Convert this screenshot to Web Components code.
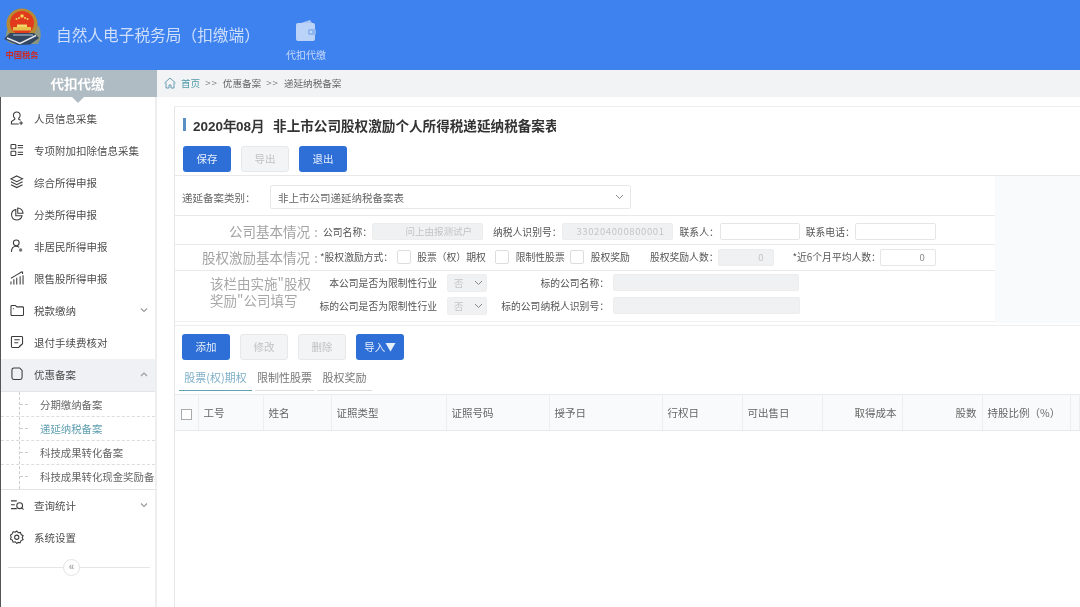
<!DOCTYPE html>
<html lang="zh-CN"><head><meta charset="utf-8"><title>自然人电子税务局（扣缴端）</title>
<style>
html,body{margin:0;height:607px;overflow:hidden;background:#fff}
body{font-family:"Noto Sans CJK SC","Liberation Sans",sans-serif;font-size:10.5px;color:#555;display:flex;flex-direction:column;filter:blur(.35px)}
.body{display:flex;flex:1;min-height:0}
</style></head><body>
<app-header></app-header>
<div class="body">
<side-nav>
<nav-item icon="user">人员信息采集</nav-item>
<nav-item icon="list">专项附加扣除信息采集</nav-item>
<nav-item icon="layers">综合所得申报</nav-item>
<nav-item icon="pie">分类所得申报</nav-item>
<nav-item icon="person">非居民所得申报</nav-item>
<nav-item icon="chart">限售股所得申报</nav-item>
<nav-item icon="folder" chevron="down">税款缴纳</nav-item>
<nav-item icon="doc">退付手续费核对</nav-item>
<nav-item icon="page" chevron="up" active>优惠备案</nav-item>
<sub-menu>
<sub-item>分期缴纳备案</sub-item>
<sub-item active>递延纳税备案</sub-item>
<sub-item>科技成果转化备案</sub-item>
<sub-item>科技成果转化现金奖励备案</sub-item>
</sub-menu>
<nav-item icon="search" chevron="down">查询统计</nav-item>
<nav-item icon="gear">系统设置</nav-item>
</side-nav>
<main-area>
<filing-form></filing-form>
</main-area>
</div>
<script>
const def=(name,css,html,init)=>customElements.define(name,class extends HTMLElement{
  connectedCallback(){ if(this.shadowRoot)return;
    const r=this.attachShadow({mode:'open'});
    r.innerHTML='<style>'+css+'</style>'+(typeof html==='function'?html(this):html);
    if(init)init(this,r);
  }});
const ic={
user:'<path d="M7 1a3.500 3.500 0 0 1 3.500 3.500c0 1.500-.7 2.500-1.500 3v1l2 1M7 1a3.500 3.500 0 0 0-3.500 3.500c0 1.500.7 2.500 1.500 3v1L1.500 11v2.500H9M11.500 10.500v4M9.500 12.500h4"/>',
list:'<rect x="1" y="1.500" width="5" height="4.500" rx=".8"/><rect x="1" y="8.500" width="5" height="4.500" rx=".8"/><path d="M8 2.500h5.500M8 5h5.500M8 9.500h5.500M8 12h5.500"/>',
layers:'<path d="M7 1l6 3-6 3-6-3zM1 7l6 3 6-3M1 10l6 3 6-3"/>',
pie:'<path d="M6 2.500a5.500 5.500 0 1 0 6.500 6.500H6z"/><path d="M8 1a5.500 5.500 0 0 1 5.500 5.500H8z"/>',
person:'<circle cx="6.500" cy="4" r="3"/><path d="M1.500 13.500c0-3.500 2-6 5-6 1.200 0 2 .3 3 1"/><circle cx="11" cy="11.500" r="1.800" fill="#777" stroke="none"/>',
chart:'<path d="M1 14v-3M4 14V8.500M7 14V7M10.500 14V5.500M13.500 14V4.500M1 7.500l5-3 6-3.500M11 1h2v2"/>',
folder:'<path d="M1 3.500a1 1 0 0 1 1-1h3.500L7 4h6a1 1 0 0 1 1 1v7a1 1 0 0 1-1 1H2a1 1 0 0 1-1-1zM3 6h1"/>',
doc:'<path d="M9 13H2.500a1 1 0 0 1-1-1V2.500a1 1 0 0 1 1-1H12a1 1 0 0 1 1 1V9zM4.500 5h5.500M4.500 8h4M9 13l1.500-2 2.500-2"/>',
page:'<path d="M4 1h6l2.500 2.500V11a2 2 0 0 1-2 2H4a2 2 0 0 1-2-2V3a2 2 0 0 1 2-2z"/>',
search:'<path d="M1 3h6M1 7h4M1 11h6"/><circle cx="10" cy="8" r="3"/><path d="M12 10l2 2"/>',
gear:'<path d="M7 1l1.500 1.800 2.300-.3.800 2.200 2 1.300-1 2 1 2-2.200 1-.8 2.200-2.300-.4L7 14l-1.500-1.800-2.300.4-.8-2.200L.3 9.400l1-2-1-2 2-1.300.9-2.200 2.300.3z"/><circle cx="7" cy="7.500" r="2.200"/>'
};
def('app-header',`:host{display:flex;height:70px;background:#3d82ef;color:#d3e2fb;flex:none}
.logo{width:50px;margin-left:2px;display:block;flex:none}
.t{font-size:15.700px;margin:24px 0 0 4px;line-height:22px;color:#cfdffb;width:226px;white-space:nowrap}
.m{display:flex;flex-direction:column;align-items:center;width:42px;margin-left:3px;padding-top:19px}
.m svg{display:block}.m span{font-size:10px;margin-top:6px;line-height:14px;color:#c6d9f9;white-space:nowrap}`,
`<svg class="logo" width="50" height="70" viewBox="0 0 50 70">
<path d="M5 30 Q1 42 11 44 L36 44 Q41 36 37 26 L22 26z" fill="#8b957f"/>
<circle cx="20" cy="24" r="15.500" fill="#b98a32"/><circle cx="20" cy="23" r="12" fill="#e23a1c"/>
<path d="M11 27h18v3.500H11z" fill="#e7c14a"/><path d="M15 24.500h10v2.500H15z" fill="#f1d768"/>
<circle cx="20" cy="16" r="1.800" fill="#f3d55a"/><circle cx="14.500" cy="19" r="1" fill="#f3d55a"/><circle cx="17" cy="18" r="1" fill="#f3d55a"/><circle cx="23" cy="18" r="1" fill="#f3d55a"/><circle cx="25.500" cy="19" r="1" fill="#f3d55a"/>
<path d="M8 33h24l5 5-9 6.500-12 .5-14-6z" fill="#33465f"/><path d="M5 38l13 5.500 16-8" stroke="#e3e8ee" stroke-width="1.500" fill="none"/><path d="M11 35h20" stroke="#bcd" fill="none"/>
<text x="3.500" y="58" font-size="8.500" font-weight="700" fill="#cc2a24" font-family="Noto Sans CJK SC,sans-serif" textLength="33" lengthAdjust="spacingAndGlyphs">中国税务</text></svg>
<div class="t">自然人电子税务局（扣缴端）</div>
<div class="m"><svg width="22" height="23" viewBox="0 0 22 23"><path d="M3 5 L15 1 L17 4z" fill="#a9c6f7"/><rect x="1" y="4" width="19" height="18" rx="2" fill="#bcd3f8"/><rect x="13" y="10" width="8" height="6" rx="1.500" fill="#8fb5f3"/><circle cx="16" cy="13" r="1" fill="#dfe9fc"/></svg><span>代扣代缴</span></div>`);

def('side-nav',`:host{display:flex;flex-direction:column;flex:none;width:157px;box-sizing:border-box;border-left:1px solid #555;border-right:2px solid #eceef0;position:relative;background:#fff}
.top{height:27px;margin:0 -2px 0 -1px;background:#b0bcc4;color:#fff;font:700 13.500px/27px "Noto Sans CJK SC",sans-serif;text-align:center;position:relative;text-indent:-2px;flex:none}
.top:after{content:"";position:absolute;left:72px;top:27px;border:6px solid transparent;border-top:6px solid #b0bcc4;border-bottom:0}
.list{padding-top:6px;display:flex;flex-direction:column}
.c{height:1px;background:#e6e6e6;margin:13px 5px 0 7px;position:relative;flex:none}
.c i{position:absolute;left:55px;top:-8px;width:15px;height:15px;border:1px solid #e4e4e4;border-radius:50%;background:#fff;color:#aaa;font:700 10px/14px "Liberation Sans",sans-serif;text-align:center}`,
`<div class="top">代扣代缴</div><div class="list"><slot></slot><div class="c"><i>«</i></div></div>`);

def('nav-item',`:host{display:flex;align-items:center;height:32px;font-size:10.500px;color:#4c4c4c;position:relative}
:host([active]){background:#f0f1f4}
svg.i{width:14px;height:14px;margin-left:9px;margin-right:10px;margin-top:-2px;flex:none;fill:none;stroke:#3c3c3c;stroke-width:1.100}
.t{flex:1;white-space:nowrap;margin-top:-2px}
svg.ch{width:8px;height:6px;margin-right:7px;margin-top:-2px;fill:none;stroke:#999;stroke-width:1.100}`,
h=>{const c=h.getAttribute('chevron');
return `<svg class="i" viewBox="0 0 14.500 14.500">${ic[h.getAttribute('icon')]||''}</svg><span class="t"><slot></slot></span>`+
(c?`<svg class="ch" viewBox="0 0 8 6"><path d="${c==='up'?'M1 5l3-3 3 3':'M1 1.500l3 3 3-3'}"/></svg>`:'')});

def('sub-menu',`:host{display:flex;flex-direction:column;background:#fff;border-top:1px solid #e4e4e4;border-bottom:1px solid #e4e4e4;box-sizing:border-box;height:99px;padding-top:1px;position:relative;overflow:hidden}
:host:before{content:"";position:absolute;left:18px;top:0;bottom:0;border-left:1px dashed #ccc}`,`<slot></slot>`);
def('sub-item',`:host{display:block;height:24px;flex:none;box-sizing:border-box;border-bottom:1px dashed #ddd;font-size:10.400px;line-height:23px;color:#666;white-space:nowrap;overflow:hidden;padding-left:39px;position:relative}
:host(:last-child){border-bottom:0}
:host([active]){color:#5f9fb0}
:host:before{content:"";position:absolute;left:19px;top:11px;width:8px;border-top:1px dashed #ccc}`,`<slot></slot>`);

def('main-area',`:host{flex:1;min-width:0;display:flex;flex-direction:column;background:#fff}
.crumb{height:27px;background:#f1f3f5;flex:none;display:flex;align-items:center;padding:0 0 1px 7px;box-sizing:border-box;font-size:9.600px;color:#666;white-space:nowrap}
.crumb svg{width:12px;height:12px;margin-right:5px;fill:none;stroke:#6a9bb5}
.crumb b{font-weight:400;color:#4f9aa8}.crumb i{font-style:normal;color:#888;margin:0 5px;letter-spacing:1px}
.wrap{flex:1;min-height:0;padding:9px 0 0 17px;overflow:hidden}`,
`<div class="crumb"><svg viewBox="0 0 12 12"><path d="M.5 6L6 1l5.500 5M2 5.500V11h3V8h2v3h3V5.500"/></svg><b>首页</b><i>&gt;&gt;</i>优惠备案<i>&gt;&gt;</i>递延纳税备案</div><div class="wrap"><slot></slot></div>`);

def('ui-btn',`:host{display:inline-block;width:48px;height:26px;box-sizing:border-box;border-radius:3px;background:#2e6fd7;color:#e6effc;font-size:10.500px;line-height:26px;text-align:center;flex:none;white-space:nowrap}
:host([off]){background:#f3f4f5;border:1px solid #e7e8ea;color:#c0c2c4;line-height:24px}`,`<slot></slot>`);
def('ui-input',`:host{display:block;height:17px;box-sizing:border-box;border:1px solid #e6e6e6;border-radius:2px;background:#fff;font-size:9.500px;line-height:15px;color:#c4c4c4;text-align:right;padding:0 10px;flex:none;white-space:nowrap;overflow:hidden}
:host([off]){background:#f0f1f2;border-color:#ededed}`,`<slot></slot>`);
def('ui-check',`:host{display:block;width:14px;height:14px;box-sizing:border-box;border:1px solid #ddd;border-radius:2px;background:#fff;flex:none}`,``);
def('ui-select',`:host{display:flex;align-items:center;justify-content:space-between;box-sizing:border-box;border:1px solid #e8e8e8;border-radius:2px;background:#fff;flex:none;padding:0 6px 0 7px;color:#666;font-size:10.500px;white-space:nowrap}
:host([off]){background:#f0f1f2;color:#c4c4c4;border-color:#eee}
svg{width:9px;height:6px;fill:none;stroke:#888;stroke-width:1}`,`<slot></slot><svg viewBox="0 0 9 6"><path d="M1 1l3.500 3.500L8 1"/></svg>`);

def('filing-form',`:host{display:block;border-top:1px solid #eee;border-left:1px solid #e6e6e6;height:600px;font-size:9.800px;color:#555;white-space:nowrap}
.title{display:flex;align-items:center;height:39px;width:381px;overflow:hidden;padding:0 0 4px 8px;box-sizing:border-box;color:#333;font-weight:700;font-size:13.600px;flex:none}
.title i{width:3px;height:13px;background:#5a8fc6;margin-right:7px;flex:none}
.title b{font-family:"Liberation Sans",sans-serif;font-size:13.500px;margin-right:9px;flex:none}
.title span{flex:none}
.bar{display:flex;gap:10px;padding-left:8px;height:29px}
.top{display:flex;border-top:1px solid #e9e9e9}.left{width:820px;flex:none}.pad{flex:1;background:#f9fafc;height:147px}
.row{display:flex;align-items:center;border-top:1px solid #e9e9e9;box-sizing:border-box}
.row.sel{border-top:0;height:39px;padding:3px 0 0 7px;font-size:10.500px;color:#666}
.sec{width:135px;text-align:right;font-size:13.500px;color:#a3a3a3;flex:none;line-height:19px}
.col{width:8px;text-align:center;font-size:13px;color:#aaa;margin:0 3px 0 2px;flex:none}
.r1{height:29px;padding-top:3px}.r2{height:26px;padding-bottom:1px}
.lab{flex:none}
.t3{height:52px;align-items:stretch;border-bottom:1px solid #f0f0f0}
.t3 .sec{padding-left:35px;width:102px;align-self:center;text-align:left;color:#a8a8a8;white-space:normal;line-height:17px;margin-bottom:8px}
.g{display:grid;grid-template-columns:135px 50px 116px 187px;grid-auto-rows:23px;align-items:center}
.g .lab{text-align:right;padding-right:10px}
.g .l2{padding-right:4px}
.acts{display:flex;gap:10px;padding:8px 0 0 7px;height:43px;box-sizing:border-box;border-top:1px solid #eee;margin-top:2px}
.tabs{display:flex;height:21px;margin-left:4px;font-size:11px;margin-top:2px;color:#777}
.tabs span{border-bottom:1px solid #ddd;box-sizing:border-box;text-align:center;line-height:14px;margin-right:3px}
.tabs .on{border-bottom:1px solid #5f9fb0;color:#7fb0c8;width:73px}
table{border-collapse:collapse;table-layout:fixed;width:905px;margin-top:3px;font-size:10.500px}
th{height:36px;font-weight:400;background:#f9fafb;color:#666;text-align:left;padding:0 5px;border:1px solid #e8eaed;border-left-color:#eceef0;border-right-color:#eceef0;box-sizing:border-box;white-space:nowrap}
th.ra{text-align:right}
th:first-child{text-align:center;border-left:0}
.cb{display:inline-block;width:11px;height:11px;border:1px solid #aaa;background:#fff;vertical-align:middle;box-sizing:border-box}`,
`<div class="title"><i></i><b>2020年08月</b><span>非上市公司股权激励个人所得税递延纳税备案表</span></div>
<div class="bar"><ui-btn>保存</ui-btn><ui-btn off>导出</ui-btn><ui-btn>退出</ui-btn></div>
<div class="top"><div class="left">
<div class="row sel"><span style="width:88px">递延备案类别：</span><ui-select style="width:361px;height:24px">非上市公司递延纳税备案表</ui-select></div>
<div class="row r1"><span class="sec">公司基本情况</span><span class="col">:</span><span class="lab">公司名称：</span><ui-input off style="width:111px">问上由报测试户</ui-input>
<span class="lab" style="margin-left:10px">纳税人识别号：</span><ui-input off style="width:111px;padding:0 7px;letter-spacing:.6px">330204000800001</ui-input>
<span class="lab" style="margin-left:7px">联系人：</span><ui-input style="width:80px;margin-left:1px"></ui-input>
<span class="lab" style="margin-left:6px">联系电话：</span><ui-input style="width:81px"></ui-input></div>
<div class="row r2"><span class="sec">股权激励基本情况</span><span class="col" style="margin-right:0">:</span><span class="lab">*股权激励方式：</span><ui-check style="margin-left:4px"></ui-check>
<span class="lab" style="margin-left:6px">股票（权）期权</span><ui-check style="margin-left:9px"></ui-check>
<span class="lab" style="margin-left:7px">限制性股票</span><ui-check style="margin-left:5px"></ui-check>
<span class="lab" style="margin-left:7px">股权奖励</span><span class="lab" style="margin-left:20px">股权奖励人数：</span><ui-input off style="width:56px">0</ui-input>
<span class="lab" style="margin-left:18px">*近6个月平均人数：</span><ui-input style="width:56px;margin-left:-1px;color:#888">0</ui-input></div>
<div class="row t3"><span class="sec">该栏由实施"股权<br>奖励"公司填写</span>
<div class="g"><span class="lab">本公司是否为限制性行业</span><ui-select off style="width:40px;height:18px;padding:0 3px 0 6px;font-size:9.500px">否</ui-select><span class="lab l2">标的公司名称：</span><ui-input off style="width:186px"></ui-input>
<span class="lab">标的公司是否为限制性行业</span><ui-select off style="width:40px;height:18px;padding:0 3px 0 6px;font-size:9.500px">否</ui-select><span class="lab l2">标的公司纳税人识别号：</span><ui-input off style="width:187px"></ui-input></div></div>
</div><div class="pad"></div></div>
<div class="acts"><ui-btn>添加</ui-btn><ui-btn off>修改</ui-btn><ui-btn off>删除</ui-btn><ui-btn>导入▼</ui-btn></div>
<div class="tabs"><span class="on">股票(权)期权</span><span style="width:59px">限制性股票</span><span style="width:55px">股权奖励</span></div>
<table><colgroup><col style="width:23px"><col style="width:65px"><col style="width:68px"><col style="width:115px"><col style="width:103px"><col style="width:113px"><col style="width:80px"><col style="width:80px"><col style="width:80px"><col style="width:80px"><col style="width:88px"><col></colgroup>
<tr><th><span class="cb"></span></th><th>工号</th><th>姓名</th><th>证照类型</th><th>证照号码</th><th>授予日</th><th>行权日</th><th>可出售日</th><th class="ra">取得成本</th><th class="ra">股数</th><th>持股比例（%）</th><th></th></tr></table>`);
</script>
</body></html>
